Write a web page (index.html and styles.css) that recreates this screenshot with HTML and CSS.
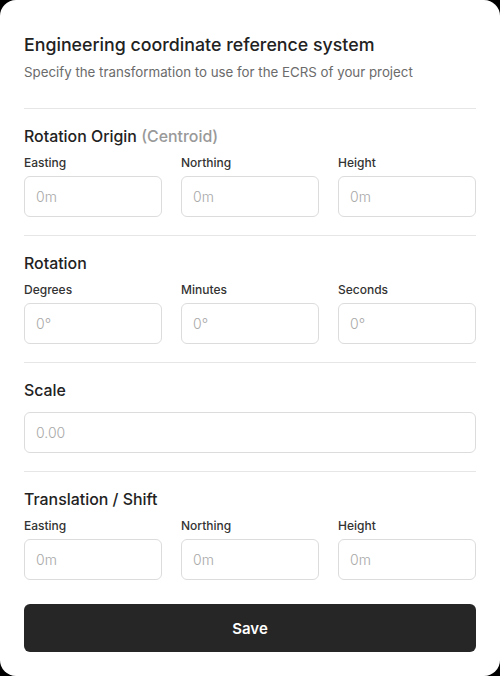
FILE: index.html
```html
<!DOCTYPE html>
<html>
<head>
<meta charset="utf-8">
<link rel="stylesheet" href="styles.css">
</head>
<body>
<div class="card">
  <h1 class="title">Engineering coordinate reference system</h1>
  <p class="subtitle">Specify the transformation to use for the ECRS of your project</p>

  <section class="section">
    <h2 class="section-title">Rotation Origin <span class="muted">(Centroid)</span></h2>
    <div class="grid">
      <label class="field"><span class="label">Easting</span><input class="input" placeholder="0m"></label>
      <label class="field"><span class="label">Northing</span><input class="input" placeholder="0m"></label>
      <label class="field"><span class="label">Height</span><input class="input" placeholder="0m"></label>
    </div>
  </section>

  <section class="section">
    <h2 class="section-title">Rotation</h2>
    <div class="grid">
      <label class="field"><span class="label">Degrees</span><input class="input" placeholder="0°"></label>
      <label class="field"><span class="label">Minutes</span><input class="input" placeholder="0°"></label>
      <label class="field"><span class="label">Seconds</span><input class="input" placeholder="0°"></label>
    </div>
  </section>

  <section class="section">
    <h2 class="section-title scale-title">Scale</h2>
    <input class="input" placeholder="0.00">
  </section>

  <section class="section last">
    <h2 class="section-title">Translation / Shift</h2>
    <div class="grid">
      <label class="field"><span class="label">Easting</span><input class="input" placeholder="0m"></label>
      <label class="field"><span class="label">Northing</span><input class="input" placeholder="0m"></label>
      <label class="field"><span class="label">Height</span><input class="input" placeholder="0m"></label>
    </div>
  </section>

  <button class="save">Save</button>
</div>
</body>
</html>
```

FILE: styles.css
```css
* { box-sizing: border-box; }
html, body { margin: 0; padding: 0; background: #000; }
body { width: 500px; height: 676px; font-family: Inter, "Noto Sans", sans-serif; }
.card {
  width: 500px;
  height: 676px;
  background: #fff;
  border-radius: 16px;
  padding: 33px 24px 24px;
  display: flex;
  flex-direction: column;
}
.title {
  margin: 0;
  font-size: 17.8px;
  line-height: 24px;
  font-weight: 500;
  color: #222;
}
.subtitle {
  margin: 5px 0 0;
  font-size: 13.3px;
  line-height: 20px;
  color: #6b6b6b;
}
.section {
  border-top: 1px solid #e6e6e6;
  margin-top: 26px;
  padding-top: 17px;
}
.section + .section { margin-top: 18px; }
.section-title {
  margin: 0;
  font-size: 15.9px;
  line-height: 22px;
  font-weight: 500;
  color: #222;
}
.scale-title { margin-bottom: 10px; }
.muted { color: #999; }
.grid {
  display: grid;
  grid-template-columns: repeat(3, 1fr);
  column-gap: 19px;
  margin-top: 7px;
}
.field { display: flex; flex-direction: column; }
.label {
  font-size: 12px;
  line-height: 16px;
  font-weight: 500;
  color: #333;
  margin-bottom: 5px;
}
.input {
  display: block;
  width: 100%;
  height: 41px;
  border: 1px solid #dcdcdc;
  border-radius: 6px;
  padding: 0 11px;
  font-family: Inter, "Noto Sans", sans-serif;
  font-size: 14px;
  font-weight: 300;
  color: #222;
  background: #fff;
  outline: none;
}
.input::placeholder { color: #a8a8a8; }
.save {
  margin-top: 24px;
  height: 48px;
  width: 100%;
  border: none;
  border-radius: 6px;
  background: #262626;
  color: #fff;
  font-family: Inter, "Noto Sans", sans-serif;
  font-size: 15px;
  font-weight: 600;
}
```
